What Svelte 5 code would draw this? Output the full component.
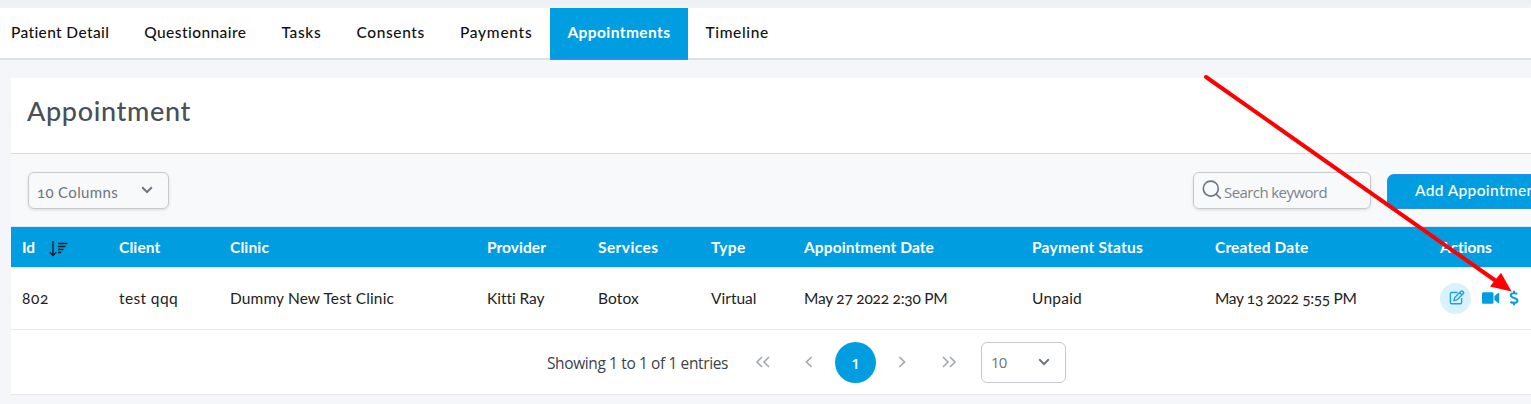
<script>
  const tabs = [
    { label: 'Patient Detail', width: 98.5 },
    { label: 'Questionnaire', width: 102.5 },
    { label: 'Tasks', width: 40 },
    { label: 'Consents', width: 68.5 },
    { label: 'Payments', width: 72.5 },
    { label: 'Appointments', width: 103 },
    { label: 'Timeline', width: 63.5 },
  ];

  let activeTab = $state('Appointments');

  // col: column width, head / cell: text widths
  const columns = [
    { name: 'Id', value: '802', col: 97, head: 13, cell: 27 },
    { name: 'Client', value: 'test qqq', col: 111, head: 41.5, cell: 59 },
    { name: 'Clinic', value: 'Dummy New Test Clinic', col: 257, head: 39, cell: 164 },
    { name: 'Provider', value: 'Kitti Ray', col: 111, head: 59, cell: 57 },
    { name: 'Services', value: 'Botox', col: 113, head: 60.5, cell: 41 },
    { name: 'Type', value: 'Virtual', col: 93, head: 34.5, cell: 45.5 },
    { name: 'Appointment Date', value: 'May 27 2022 2:30 PM', col: 228, head: 130, cell: 143.5 },
    { name: 'Payment Status', value: 'Unpaid', col: 183, head: 111, cell: 50 },
    { name: 'Created Date', value: 'May 13 2022 5:55 PM', col: 225, head: 93.5, cell: 141.5 },
  ];

  // Spread the letters so the label takes the given width
  function fit(node, width) {
    const natural = node.getBoundingClientRect().width;
    node.style.letterSpacing = (width - natural) / node.textContent.length + 'px';
  }
</script>

<div class="page">
  <nav class="tabs">
    {#each tabs as tab}
      <button class="tab" class:active={activeTab === tab.label} onclick={() => (activeTab = tab.label)}>
        <span use:fit={tab.width}>{tab.label}</span>
      </button>
    {/each}
  </nav>

  <section class="card">
    <header class="card-header">
      <h1><span use:fit={164}>Appointment</span></h1>
    </header>

    <div class="toolbar">
      <div class="select columns-select">
        <span use:fit={81}>10 Columns</span>
        <svg width="12" height="8" viewBox="0 0 12 8"><path d="M1.2 1.3 6 6.1l4.8-4.8" /></svg>
      </div>
      <div class="search">
        <svg width="20" height="20" viewBox="0 0 20 20">
          <circle cx="8.8" cy="8.6" r="7.5" />
          <path d="M14 14l4.8 4.6" />
        </svg>
        <span use:fit={103}>Search keyword</span>
      </div>
      <button class="add"><span use:fit={126.5}>Add Appointment</span></button>
    </div>

    <table>
      <colgroup>
        {#each columns as c}
          <col style="width: {c.col}px" />
        {/each}
        <col />
      </colgroup>
      <thead>
        <tr>
          {#each columns as c, i}
            <th>
              <span use:fit={c.head}>{c.name}</span>
              {#if i === 0}
                <svg class="sort" width="19" height="17" viewBox="0 0 19 17">
                  <path d="M4 1v14.2M.8 12.2 4 15.6l3.2-3.4" stroke-width="1.4" />
                  <path d="M9 3.5h9.500M9 6.500h7.500M9 9.500h5.500M9 12.500h3.200" stroke-width="1.4" />
                </svg>
              {/if}
            </th>
          {/each}
          <th><span use:fit={52}>Actions</span></th>
        </tr>
      </thead>
      <tbody>
        <tr>
          {#each columns as c}
            <td><span use:fit={c.cell}>{c.value}</span></td>
          {/each}
          <td>
            <div class="actions">
              <button class="edit" aria-label="Edit">
                <svg width="16" height="16" viewBox="0 0 16 16">
                  <path d="M8.6 2.5H2.6Q1.4 2.5 1.4 3.7v8.9q0 1.2 1.2 1.2h8.8q1.2 0 1.2-1.2V8" />
                  <path d="M5 10.6l.7-3L12 1.3q.8-.8 1.7 0l.6.6q.8.8 0 1.7L8 9.9zM10.7 2.7l2.3 2.3" />
                </svg>
              </button>
              <svg class="video" width="18" height="12" viewBox="0 0 18 12">
                <rect x="0" y="0.3" width="11.5" height="11.4" rx="1.3" />
                <path d="M12.4 4.1 15.9 1.2q1.3-.7 1.3.6v8.4q0 1.3-1.3.6l-3.5-2.9z" />
              </svg>
              <svg class="dollar" width="10" height="16" viewBox="0 0 10 16">
                <path d="M5 .8v2.4M5 12.8v2.4M8.2 3.8C6.5 3 1.7 2.4 1.7 5.3c0 3.3 6.8 2 6.8 5.2 0 3-4.7 2.7-7.1 1.5" />
              </svg>
            </div>
          </td>
        </tr>
      </tbody>
    </table>

    <footer class="pager">
      <span class="summary"><span use:fit={181}>Showing 1 to 1 of 1 entries</span></span>
      <svg width="16" height="12" viewBox="0 0 16 12"><path d="M7 1 2 6l5 5M14 1 9 6l5 5" /></svg>
      <svg class="prev" width="8" height="12" viewBox="0 0 8 12"><path d="M6.5 1l-5 5 5 5" /></svg>
      <span class="current">1</span>
      <svg class="next" width="8" height="12" viewBox="0 0 8 12"><path d="M1.5 1l5 5-5 5" /></svg>
      <svg class="last" width="16" height="12" viewBox="0 0 16 12"><path d="M2 1l5 5-5 5M9 1l5 5-5 5" /></svg>
      <div class="select rows-select">
        <span use:fit={15.5}>10</span>
        <svg width="12" height="8" viewBox="0 0 12 8"><path d="M1.2 1.3 6 6.1l4.8-4.8" /></svg>
      </div>
    </footer>
  </section>

  <svg class="arrow" width="1531" height="404" viewBox="0 0 1531 404">
    <path d="M1206 77 1496 281" stroke="#fe0000" stroke-width="4" stroke-linecap="round" />
    <path d="M1511.500 291.500 1490 286.500 1501 272.800z" fill="#fe0000" />
  </svg>
</div>

<style>
  :global(body) {
    background: #f5f6fa;
  }

  .page {
    position: relative;
    width: 1531px;
    height: 404px;
    padding-top: 8px;
    box-sizing: border-box;
    overflow: hidden;
    background: linear-gradient(#eeeff3, #f3f4f8 8px, #f5f6fa 9px);
    font-family: Lato, 'Open Sans', sans-serif;
    font-size: 15px;
    font-variant-numeric: oldstyle-nums;
    color: #212529;
  }

  button {
    font: inherit;
    border: 0;
    padding: 0;
    cursor: pointer;
  }

  span {
    white-space: nowrap;
  }

  .tabs {
    display: flex;
    height: 52px;
    box-sizing: border-box;
    padding-left: 11px;
    background: #fff;
    border-bottom: 2px solid #dee2e6;
  }

  .tab {
    height: 52px;
    padding: 0 17.5px 5px;
    flex: none;
    box-sizing: border-box;
    background: none;
    color: #111;
    font-size: 15.5px;
    font-weight: 500;
  }

  .tab:first-child {
    padding-left: 0;
  }

  .tab.active {
    background: #009ee1;
    border-bottom: 2px solid #1e96f0;
    padding-bottom: 3px;
    color: #fff;
    font-weight: 700;
  }

  .card {
    margin: 18px 0 0 11px;
    height: 316px;
    background: #fff;
    border-bottom: 1px solid #e6e8ec;
  }

  .card-header {
    height: 76px;
    box-sizing: border-box;
    padding: 16px 17px 0 16px;
    border-bottom: 1px solid #d9dbde;
  }

  h1 {
    margin: 0;
    font-size: 27px;
    line-height: 34px;
    font-weight: 500;
    color: #495057;
  }

  .toolbar {
    display: flex;
    align-items: flex-start;
    height: 73px;
    padding: 18px 0 0 17px;
    box-sizing: border-box;
    background: #f8f9fb;
    border-bottom: 1px solid #e3e6ea;
  }

  .select {
    display: flex;
    align-items: center;
    justify-content: space-between;
    box-sizing: border-box;
    border: 1px solid #c6c9cd;
    border-radius: 6px;
    color: #6c757d;
  }

  .select svg {
    fill: none;
    stroke: #6c757d;
    stroke-width: 2;
  }

  .columns-select {
    width: 141px;
    height: 37px;
    padding: 3px 15px 0 8px;
    box-shadow: 0 1px 3px rgba(0, 0, 0, 0.12);
  }

  .columns-select svg {
    margin-bottom: 4px;
  }

  .search {
    display: flex;
    align-items: center;
    gap: 2px;
    width: 178px;
    height: 37px;
    margin-left: auto;
    padding: 0 8px;
    box-sizing: border-box;
    border: 1px solid #c6c9cd;
    border-radius: 6px;
    box-shadow: 0 1px 3px rgba(0, 0, 0, 0.12);
    font-family: 'Open Sans', 'Noto Sans', sans-serif;
    font-size: 15px;
    color: #7b848c;
  }

  .search span {
    padding-top: 2px;
  }

  .search svg {
    flex: none;
    margin-bottom: 1px;
    fill: none;
    stroke: #6c757d;
    stroke-width: 1.6;
  }

  .add {
    flex: none;
    width: 144px;
    height: 35px;
    margin: 2px 0 0 16px;
    padding: 0 0 3px 27px;
    overflow: hidden;
    text-align: left;
    background: #009ee1;
    border: 1px solid #2f8df0;
    border-right: 0;
    border-radius: 7px 0 0 7px;
    color: #fff;
    font-size: 15.5px;
    font-weight: 500;
  }

  table {
    width: 1520px;
    table-layout: fixed;
    border-collapse: separate;
    border-spacing: 0;
  }

  th,
  td {
    padding: 0 0 0 11px;
    box-sizing: border-box;
    text-align: left;
    font-size: 15.5px;
  }

  th {
    height: 41px;
    background: #009ee1;
    background-clip: padding-box;
    border-bottom: 1px solid #e3e6ea;
    color: #fff;
    font-weight: 700;
  }

  td {
    height: 62px;
    padding-bottom: 1px;
    border-bottom: 1px solid #e9ecef;
    color: #222;
  }

  .sort {
    margin-left: 10px;
    vertical-align: -4px;
    fill: none;
    stroke: #0b1d28;
  }

  .actions {
    display: flex;
    align-items: center;
  }

  .edit {
    display: flex;
    align-items: center;
    justify-content: center;
    width: 31px;
    height: 31px;
    padding-left: 2px;
    box-sizing: border-box;
    border-radius: 50%;
    background: #d9f2fd;
  }

  .edit svg {
    fill: none;
    stroke: #17a5e3;
    stroke-width: 1.4;
  }

  .video {
    margin: -1px 0 0 11px;
    fill: #009ee1;
  }

  .dollar {
    margin: -1px 0 0 9px;
    fill: none;
    stroke: #009ee1;
    stroke-width: 2;
  }

  .pager {
    display: flex;
    align-items: center;
    height: 64px;
    padding-left: 536px;
    font-family: 'Open Sans', 'Noto Sans', sans-serif;
    font-variant-numeric: normal;
  }

  .pager > svg {
    fill: none;
    stroke: #a4aab0;
    stroke-width: 1.7;
  }

  .summary {
    width: 208px;
    padding-top: 2px;
    font-size: 15.5px;
    color: #3c4248;
  }

  .prev {
    margin-left: 34px;
  }

  .current {
    width: 41px;
    height: 41px;
    margin-left: 22px;
    border-radius: 50%;
    background: #009ee1;
    color: #fff;
    font-weight: 600;
    line-height: 42px;
    text-align: center;
  }

  .next {
    margin-left: 22px;
  }

  .last {
    margin-left: 35px;
  }

  .rows-select {
    width: 85px;
    height: 41px;
    margin-left: 24px;
    padding: 0 15px 0 9px;
    font-size: 15px;
  }

  .arrow {
    position: absolute;
    inset: 0;
    pointer-events: none;
  }
</style>
